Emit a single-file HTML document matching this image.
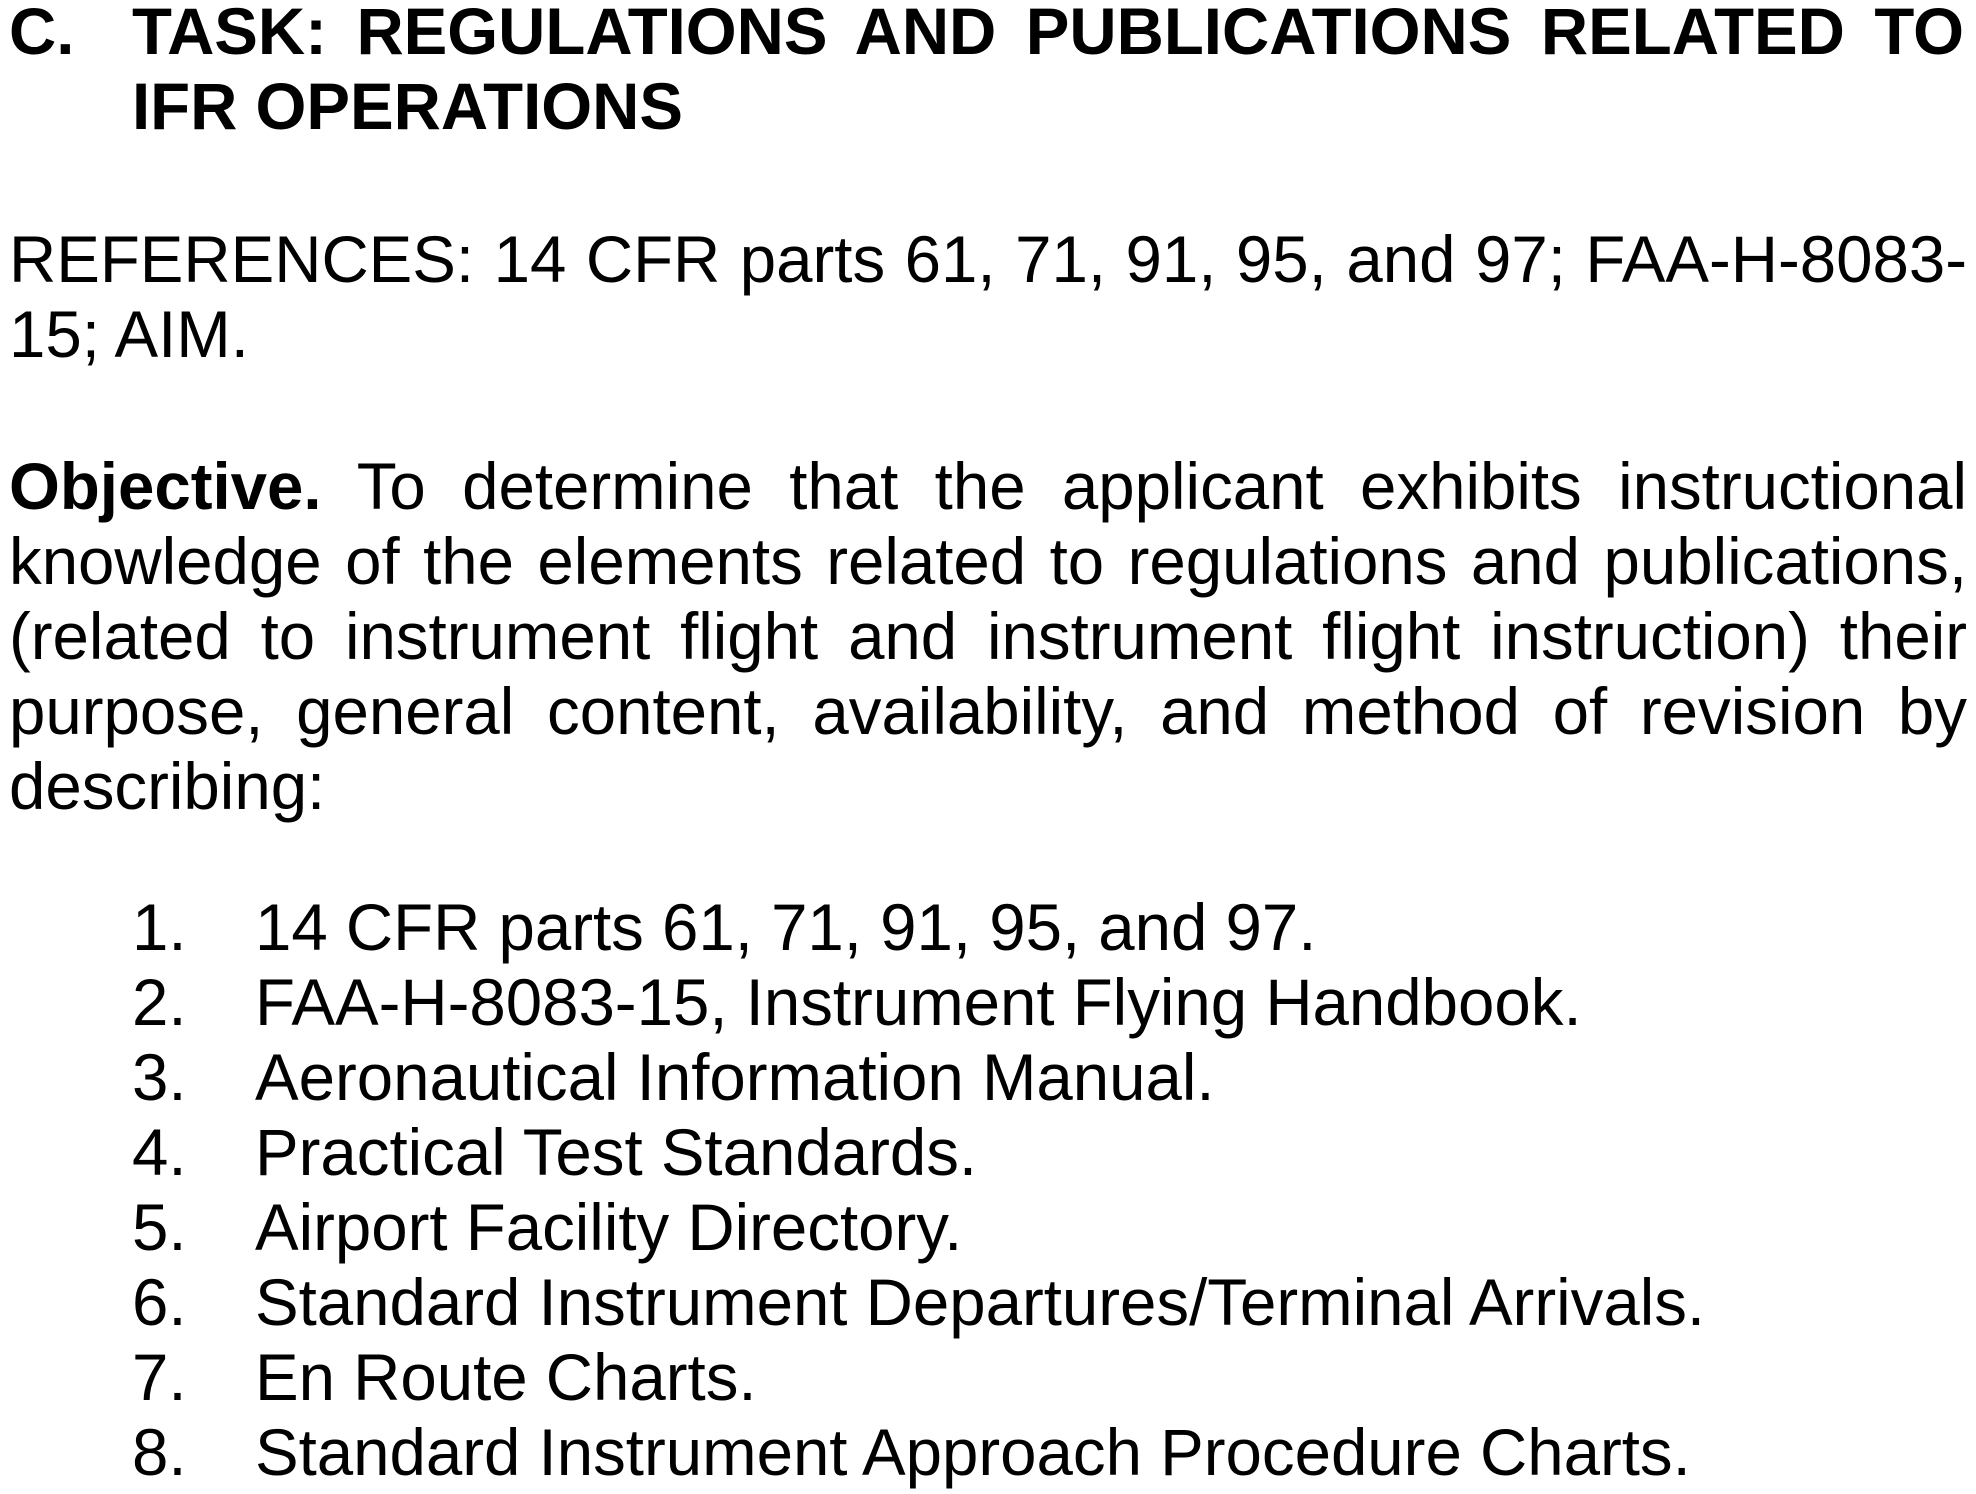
<!DOCTYPE html>
<html><head><meta charset="utf-8"><style>
html,body{margin:0;padding:0;background:#fff;}
body{width:1976px;height:1494px;position:relative;overflow:hidden;font-family:"Liberation Sans",Arial,sans-serif;color:#000;font-size:65.4px;line-height:75px;}
.l{position:absolute;white-space:nowrap;}
.j{position:absolute;left:9px;width:1958px;text-align:justify;text-align-last:justify;white-space:nowrap;}
b{font-weight:bold;}
.n{position:absolute;left:132px;}
.t{position:absolute;left:255px;}
</style></head><body>
<div class="l" style="left:9px;top:-6px;font-weight:bold;">C.</div>
<div class="l" style="left:132px;top:-6px;width:1832px;font-weight:bold;text-align:justify;text-align-last:justify;">TASK: REGULATIONS AND PUBLICATIONS RELATED TO</div>
<div class="l" style="left:132px;top:69px;font-weight:bold;">IFR OPERATIONS</div>

<div class="j" style="top:222px;">REFERENCES: 14 CFR parts 61, 71, 91, 95, and 97; FAA-H-8083-</div>
<div class="l" style="left:9px;top:297px;">15; AIM.</div>

<div class="j" style="top:449px;"><b>Objective.</b> To determine that the applicant exhibits instructional</div>
<div class="j" style="top:524px;">knowledge of the elements related to regulations and publications,</div>
<div class="j" style="top:599px;">(related to instrument flight and instrument flight instruction) their</div>
<div class="j" style="top:674px;">purpose, general content, availability, and method of revision by</div>
<div class="l" style="left:9px;top:749px;">describing:</div>

<div class="l" style="top:890px;left:0;width:1976px;height:600px;">
<div class="n" style="top:0">1.</div><div class="t" style="top:0">14 CFR parts 61, 71, 91, 95, and 97.</div>
<div class="n" style="top:75px">2.</div><div class="t" style="top:75px">FAA-H-8083-15, Instrument Flying Handbook.</div>
<div class="n" style="top:150px">3.</div><div class="t" style="top:150px">Aeronautical Information Manual.</div>
<div class="n" style="top:225px">4.</div><div class="t" style="top:225px">Practical Test Standards.</div>
<div class="n" style="top:300px">5.</div><div class="t" style="top:300px">Airport Facility Directory.</div>
<div class="n" style="top:375px">6.</div><div class="t" style="top:375px">Standard Instrument Departures/Terminal Arrivals.</div>
<div class="n" style="top:450px">7.</div><div class="t" style="top:450px">En Route Charts.</div>
<div class="n" style="top:525px">8.</div><div class="t" style="top:525px">Standard Instrument Approach Procedure Charts.</div>
</div>
</body></html>
